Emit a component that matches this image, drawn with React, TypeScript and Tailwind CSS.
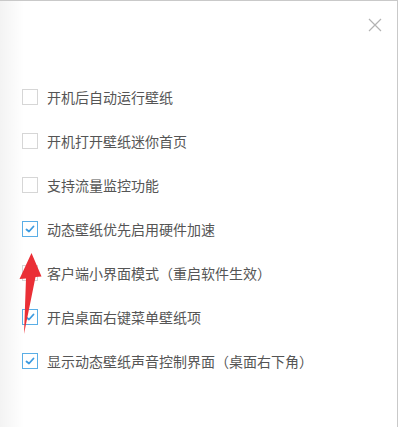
import React from 'react';

const OPTIONS = [
  { id: 1, label: '开机后自动运行壁纸', checked: false },
  { id: 2, label: '开机打开壁纸迷你首页', checked: false },
  { id: 3, label: '支持流量监控功能', checked: false },
  { id: 4, label: '动态壁纸优先启用硬件加速', checked: true },
  { id: 5, label: '客户端小界面模式（重启软件生效）', checked: false },
  { id: 6, label: '开启桌面右键菜单壁纸项', checked: true },
  { id: 7, label: '显示动态壁纸声音控制界面（桌面右下角）', checked: true },
];

function Box({ checked }: { checked: boolean }) {
  return (
    <span
      className={
        checked
          ? 'w-[16px] h-[16px] shrink-0 border border-[#5aaee6] bg-white flex items-center justify-center'
          : 'w-[16px] h-[16px] shrink-0 border border-[#d6d6d6] bg-white'
      }
    >
      {checked && (
        <svg width="10" height="8" viewBox="0 0 10 8">
          <path d="M1.5 4.5 L4 6.5 L8.5 1.5" fill="none" stroke="#3d9be0" strokeWidth="1.8" strokeLinecap="round" strokeLinejoin="round" />
        </svg>
      )}
    </span>
  );
}

export default function App() {
  return (
    <div className="relative w-[400px] h-[427px] bg-white overflow-hidden font-['Noto_Sans_CJK_SC','Noto_Sans',sans-serif]">
      <div className="absolute inset-y-0 left-0 w-[24px] bg-gradient-to-r from-[#f3f3f3] to-white" />
      <div className="absolute top-0 left-0 w-[398px] h-px bg-[#c9c9c9]" />
      <div className="absolute top-0 bottom-0 left-[397px] w-px bg-[#c9c9c9]" />

      <button className="absolute left-[368px] top-[18px] w-[14px] h-[14px]">
        <svg width="14" height="14" viewBox="0 0 14 14">
          <path d="M1 1 L13 13 M13 1 L1 13" stroke="#b3b3b3" strokeWidth="1.2" />
        </svg>
      </button>

      <div className="relative flex flex-col pt-[75px] pl-[22px]">
        {OPTIONS.map((opt) => (
          <div key={opt.id} className="h-[44px] flex items-center gap-[9px]">
            <Box checked={opt.checked} />
            <span className="text-[14px] leading-none text-[#555555]">{opt.label}</span>
          </div>
        ))}
      </div>

      <svg className="absolute left-0 top-0" width="400" height="427" viewBox="0 0 400 427">
        <polygon points="31.5,253 41.5,276.5 35.5,277 24,334 26,278.5 19.5,279" fill="#ea2f36" />
      </svg>
    </div>
  );
}
